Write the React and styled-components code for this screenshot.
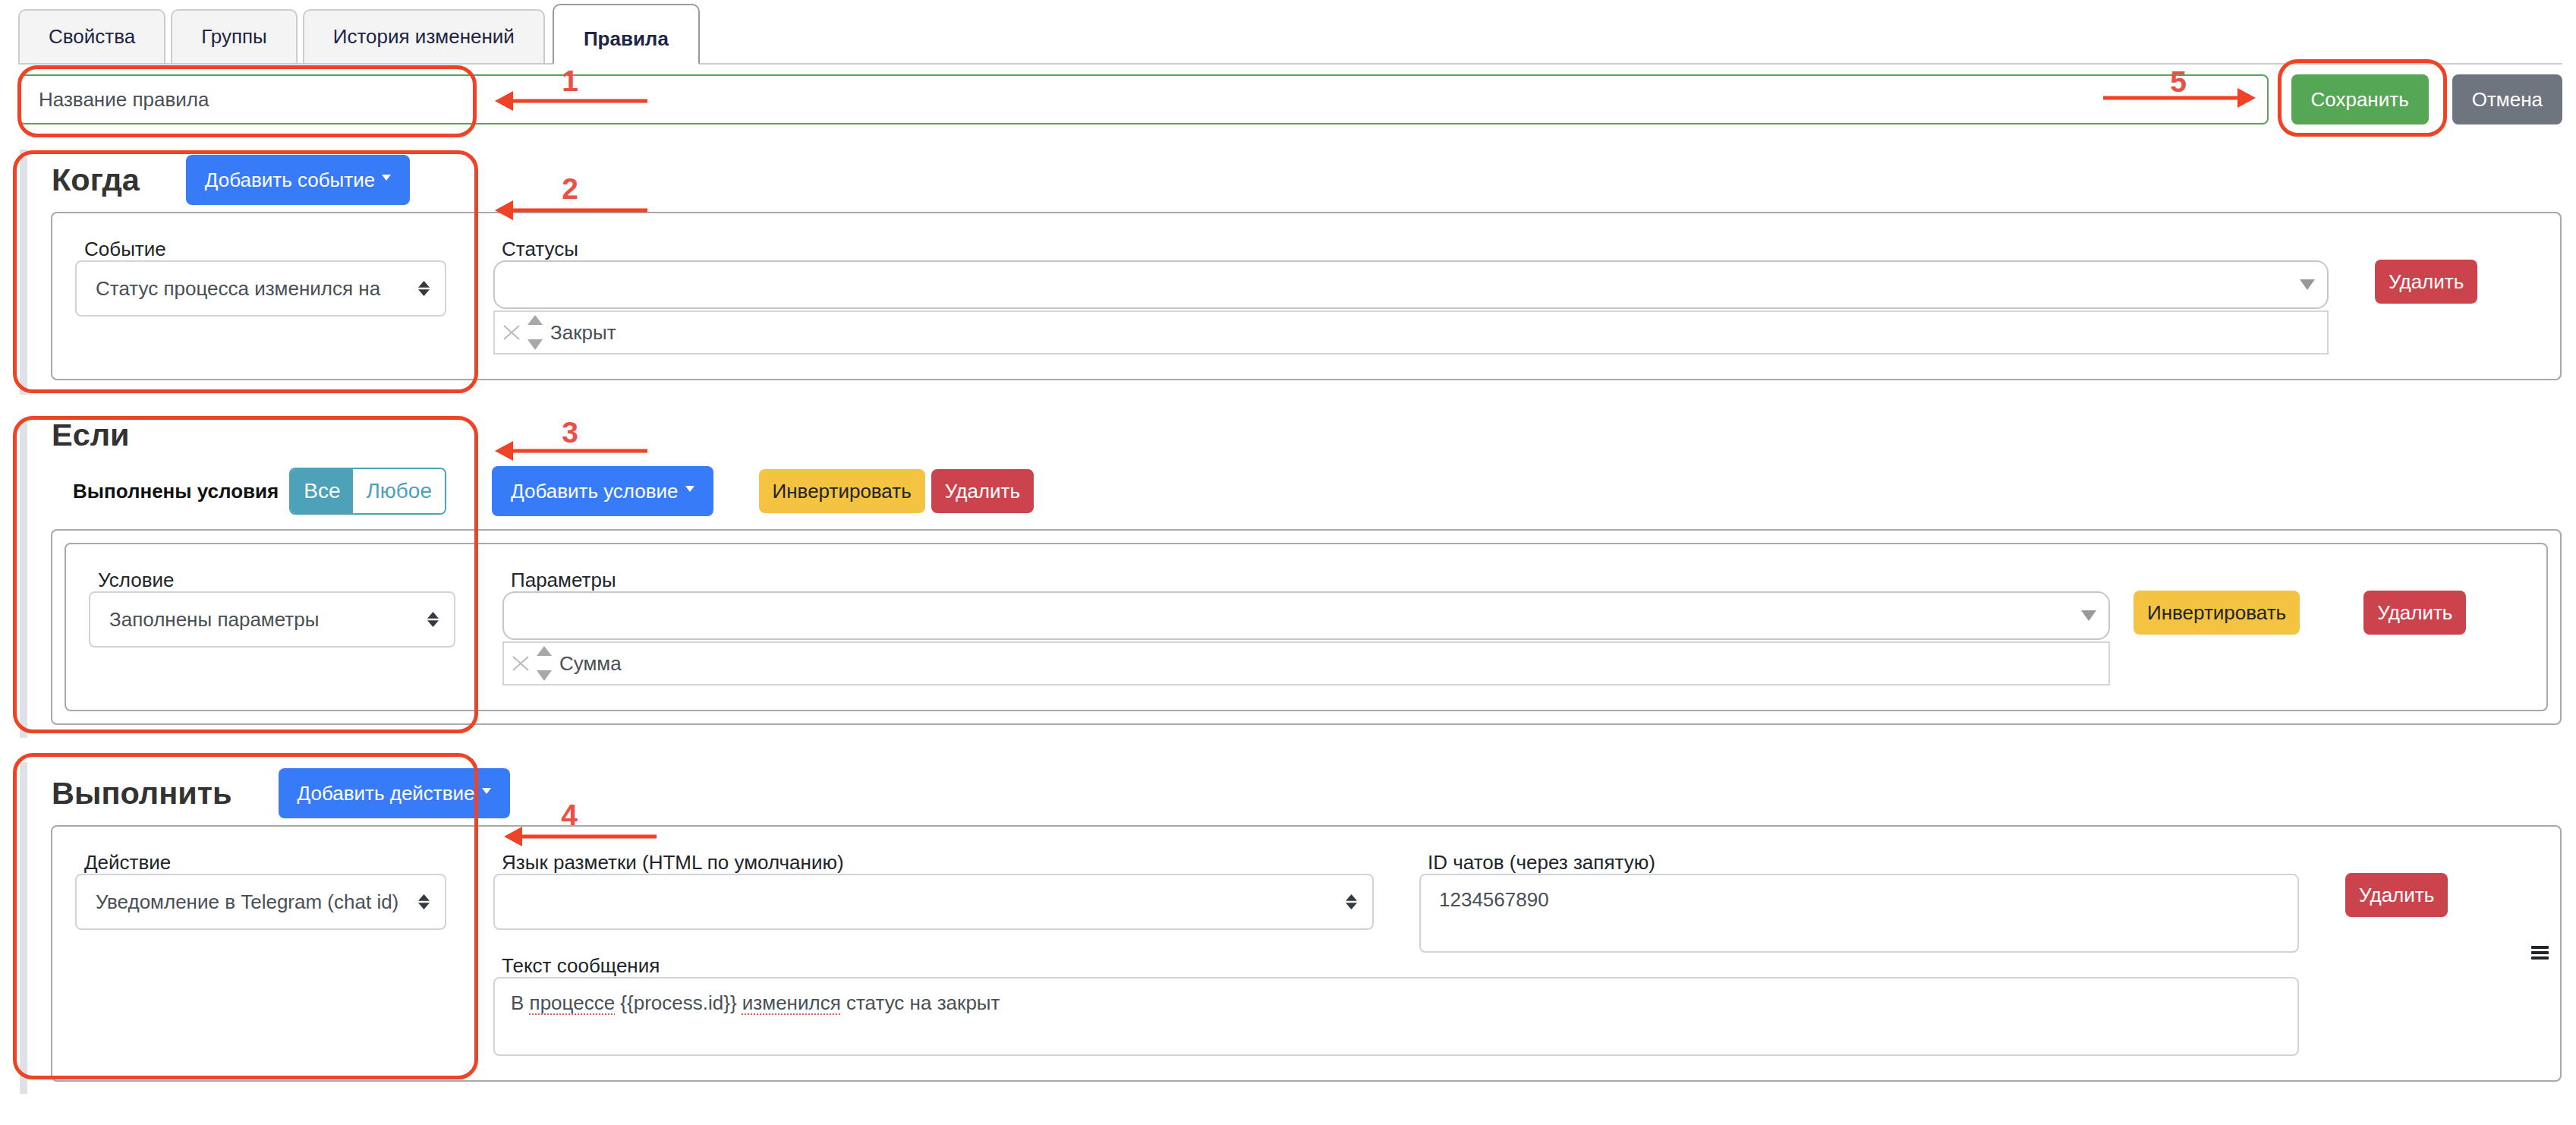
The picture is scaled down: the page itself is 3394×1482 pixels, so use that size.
import React from 'react';
import styled, { createGlobalStyle } from 'styled-components';

const Global = createGlobalStyle`
  html, body { margin: 0; padding: 0; background: #fff; }
  body { font-family: "Liberation Sans", Arial, sans-serif; font-size: 26px; color: #212529; }
  * { box-sizing: border-box; }
`;

const Page = styled.div`
  position: relative;
  width: 3394px;
  height: 1482px;
  overflow: hidden;
  padding: 5px 18px 0 24px;
`;

const TabBar = styled.div`
  display: flex;
  align-items: flex-end;
  height: 80px;
  gap: 7px;
  border-bottom: 2px solid #ccc;
`;

const Tab = styled.div`
  display: flex;
  align-items: center;
  justify-content: center;
  height: ${p => (p.$active ? '80px' : '71px')};
  margin-bottom: ${p => (p.$active ? '-2px' : '0')};
  margin-left: ${p => (p.$active ? '3px' : '0')};
  padding: ${p => (p.$active ? '13px 39px 0' : '0 38px')};
  border: 2px solid ${p => (p.$active ? '#999' : '#ccc')};
  border-bottom: ${p => (p.$active ? '2px solid #fff' : '0')};
  border-radius: 10px 10px 0 0;
  background: ${p => (p.$active ? '#fff' : '#f4f4f4')};
  color: #1f2544;
  font-weight: ${p => (p.$active ? 700 : 400)};
  font-size: 26px;
`;

const TitleRow = styled.div`
  display: flex;
  align-items: stretch;
  margin-top: 13px;
  height: 66px;
`;

const TitleInput = styled.div`
  display: flex;
  align-items: center;
  flex: 1;
  padding-left: 25px;
  margin-right: 30px;
  border: 2px solid #55a755;
  border-radius: 8px;
  color: #495057;
  font-size: 26px;
`;

const Button = styled.div`
  display: inline-flex;
  align-items: center;
  justify-content: center;
  flex: none;
  height: ${p => (p.$sm ? '58px' : '66px')};
  padding: 0 ${p => p.$pad || 18}px;
  margin-left: ${p => p.$ml || 0}px;
  margin-top: ${p => p.$mt || 0}px;
  border-radius: 8px;
  background: ${p => p.$bg};
  color: ${p => p.$fg || '#fff'};
  font-size: 26px;
  white-space: nowrap;
`;

const Caret = styled.span`
  width: 0;
  height: 0;
  margin-left: 9px;
  margin-bottom: 6px;
  border-top: 8px solid currentColor;
  border-left: 6px solid transparent;
  border-right: 6px solid transparent;
`;

const Section = styled.section`
  margin: ${p => p.$mt}px 1px 32px 2px;
  padding: ${p => p.$pt}px 0 ${p => p.$pb}px 31px;
  border-left: 10px solid #dee2e6;
`;

const SectionHead = styled.div`
  display: flex;
  align-items: center;
  gap: 61px;
  padding-left: 1px;
`;

const Heading = styled.h2`
  margin: 0;
  font-size: 41.5px;
  line-height: 40px;
  font-weight: 700;
  color: #333;
`;

const IfHeading = styled(Heading)`
  padding: 1px 0 0 1px;
`;

const ConditionsBar = styled.div`
  display: flex;
  align-items: center;
  margin-top: 21px;
  padding-left: 29px;
`;

const ConditionsLabel = styled.span`
  font-weight: 700;
  color: #111;
  font-size: 26px;
  margin-right: 14px;
  white-space: nowrap;
`;

const Toggle = styled.div`
  display: flex;
  height: 62px;
  margin-right: 60px;
  border: 2px solid #4da1b8;
  border-radius: 8px;
  overflow: hidden;
`;

const ToggleOption = styled.div`
  display: flex;
  align-items: center;
  padding: 0 ${p => p.$pad}px;
  font-size: 28px;
  background: ${p => (p.$on ? '#4da1b8' : '#fff')};
  color: ${p => (p.$on ? '#fff' : '#4da1b8')};
`;

const Panel = styled.div`
  margin-top: ${p => p.$mt || 0}px;
  border: 2px solid #a9a9a9;
  border-radius: 8px;
  padding: ${p => (p.$outer ? '16px' : '32px 0 32px 30px')};
  display: ${p => (p.$outer ? 'block' : 'flex')};
  align-items: flex-start;
`;

const FieldCol = styled.div`
  flex: none;
  width: ${p => p.$w}px;
  margin-left: ${p => p.$ml || 0}px;
`;

const Label = styled.div`
  height: 30px;
  line-height: 30px;
  padding-left: ${p => p.$pl || 11}px;
  color: #212529;
  font-size: 26px;
  white-space: nowrap;
`;

const Select = styled.div`
  display: flex;
  align-items: center;
  justify-content: space-between;
  height: 74px;
  padding: 0 20px 0 25px;
  border: 2px solid #ced4da;
  border-radius: 8px;
  color: #495057;
  font-size: 26px;
  white-space: nowrap;
`;

const MultiInput = styled.div`
  display: flex;
  align-items: center;
  justify-content: flex-end;
  height: 64px;
  padding-right: 16px;
  border: 2px solid #c6c6c6;
  border-radius: 16px;
`;

const MultiItem = styled.div`
  display: flex;
  align-items: center;
  height: 58px;
  margin-top: 2px;
  padding-left: 11px;
  gap: 10px;
  border: 2px solid #d5d5d5;
  color: #495057;
  font-size: 26px;
`;

const FormGrid = styled.div`
  display: grid;
  flex: none;
  width: 2379px;
  margin-left: 62px;
  grid-template-columns: 1160px 1159px;
  column-gap: 60px;
  row-gap: 2px;
  align-items: start;
`;

const Wide = styled.div`
  grid-column: 1 / span 2;
`;

const TextBox = styled.div`
  height: 104px;
  padding: 16px 24px 16px ${p => p.$pl || 24}px;
  border: 2px solid #ced4da;
  border-radius: 8px;
  color: #495057;
  font-size: 26px;
  line-height: 32px;
`;

const Misspelled = styled.span`
  text-decoration: underline dotted #f2574b 2px;
  text-underline-offset: 5px;
`;

const ActionsCol = styled.div`
  display: flex;
  flex-direction: column;
  align-items: flex-start;
  margin-left: 61px;
  width: 268px;
`;

const Grip = styled.svg`
  align-self: flex-end;
  margin-top: 38px;
`;

const Callout = styled.div`
  position: absolute;
  left: ${p => p.$x}px;
  top: ${p => p.$y}px;
  width: ${p => p.$w}px;
  height: ${p => p.$h}px;
  border: 5px solid #ee4326;
  border-radius: 26px;
  pointer-events: none;
`;

const ArrowSvg = styled.svg`
  position: absolute;
  left: ${p => p.$x}px;
  top: ${p => p.$y}px;
`;

const Num = styled.span`
  position: absolute;
  left: ${p => p.$x}px;
  top: ${p => p.$y}px;
  width: 40px;
  margin-left: -20px;
  text-align: center;
  font-size: 39px;
  line-height: 40px;
  font-weight: 700;
  color: #ea5043;
`;

const SortArrows = () => (
  <svg width="15" height="20" viewBox="0 0 15 20" fill="#343a40">
    <path d="M7.5 0 L15 8.7 H0 Z" />
    <path d="M7.5 20 L15 11.3 H0 Z" />
  </svg>
);

const DropArrow = () => (
  <svg width="20" height="14" viewBox="0 0 20 14" fill="#999">
    <path d="M0 0 H20 L10 14 Z" />
  </svg>
);

const ItemControls = () => (
  <>
    <svg width="22" height="20" viewBox="0 0 22 20" fill="none" stroke="#bbb" strokeWidth="2">
      <path d="M1 1 L21 19 M21 1 L1 19" />
    </svg>
    <svg width="20" height="46" viewBox="0 0 20 46" fill="#a8a8a8">
      <path d="M10 0 L20 13 H0 Z" />
      <path d="M10 46 L20 32 H0 Z" />
    </svg>
  </>
);

const LeftArrow = ({ x, y, len }) => (
  <ArrowSvg $x={x} $y={y - 13} width={len} height="26" viewBox={`0 0 ${len} 26`}>
    <path fill="#ee4326" d={`M0 13 L24 0 V10.5 H${len} V15.5 H24 V26 Z`} />
  </ArrowSvg>
);

const RightArrow = ({ x, y, len }) => (
  <ArrowSvg $x={x} $y={y - 13} width={len} height="26" viewBox={`0 0 ${len} 26`}>
    <path fill="#ee4326" d={`M${len} 13 L${len - 24} 0 V10.5 H0 V15.5 H${len - 24} V26 Z`} />
  </ArrowSvg>
);

const BLUE = '#387bf8';
const RED = '#cb444d';
const YELLOW = '#f4c342';
const DARK = '#212529';

export default function App() {
  return (
    <Page>
      <Global />
      <TabBar>
        <Tab>Свойства</Tab>
        <Tab>Группы</Tab>
        <Tab>История изменений</Tab>
        <Tab $active>Правила</Tab>
      </TabBar>

      <TitleRow>
        <TitleInput>Название правила</TitleInput>
        <Button $bg="#55a755" $pad={26}>Сохранить</Button>
        <Button $bg="#6f757e" $pad={26} $ml={31}>Отмена</Button>
      </TitleRow>

      <Section $mt={33} $pb={19} $pt={7}>
        <SectionHead>
          <Heading>Когда</Heading>
          <Button $bg={BLUE} $pad={25}>Добавить событие<Caret /></Button>
        </SectionHead>
        <Panel $mt={9}>
          <FieldCol $w={489}>
            <Label $pl={12}>Событие</Label>
            <Select>Статус процесса изменился на<SortArrows /></Select>
          </FieldCol>
          <FieldCol $w={2418} $ml={62}>
            <Label>Статусы</Label>
            <MultiInput><DropArrow /></MultiInput>
            <MultiItem><ItemControls />Закрыт</MultiItem>
          </FieldCol>
          <Button $sm $bg={RED} $ml={61} $mt={29}>Удалить</Button>
        </Panel>
      </Section>

      <Section $mt={0} $pb={17} $pt={0}>
        <IfHeading>Если</IfHeading>
        <ConditionsBar>
          <ConditionsLabel>Выполнены условия</ConditionsLabel>
          <Toggle>
            <ToggleOption $on $pad={17}>Все</ToggleOption>
            <ToggleOption $pad={17}>Любое</ToggleOption>
          </Toggle>
          <Button $bg={BLUE} $pad={25}>Добавить условие<Caret /></Button>
          <Button $sm $bg={YELLOW} $fg={DARK} $ml={60}>Инвертировать</Button>
          <Button $sm $bg={RED} $ml={8}>Удалить</Button>
        </ConditionsBar>
        <Panel $outer $mt={17}>
          <Panel>
            <FieldCol $w={483}>
              <Label $pl={12}>Условие</Label>
              <Select>Заполнены параметры<SortArrows /></Select>
            </FieldCol>
            <FieldCol $w={2118} $ml={62}>
              <Label>Параметры</Label>
              <MultiInput><DropArrow /></MultiInput>
              <MultiItem><ItemControls />Сумма</MultiItem>
            </FieldCol>
            <Button $sm $bg={YELLOW} $fg={DARK} $ml={31} $mt={29}>Инвертировать</Button>
            <Button $sm $bg={RED} $ml={84} $mt={29}>Удалить</Button>
          </Panel>
        </Panel>
      </Section>

      <Section $mt={0} $pb={16} $pt={8}>
        <SectionHead>
          <Heading>Выполнить</Heading>
          <Button $bg={BLUE} $pad={25}>Добавить действие<Caret /></Button>
        </SectionHead>
        <Panel $mt={9}>
          <FieldCol $w={489}>
            <Label $pl={12}>Действие</Label>
            <Select>Уведомление в Telegram (chat id)<SortArrows /></Select>
          </FieldCol>
          <FormGrid>
            <div>
              <Label>Язык разметки (HTML по умолчанию)</Label>
              <Select><span /><SortArrows /></Select>
            </div>
            <div>
              <Label>ID чатов (через запятую)</Label>
              <TextBox>1234567890</TextBox>
            </div>
            <Wide>
              <Label>Текст сообщения</Label>
              <TextBox $pl={21}>
                В <Misspelled>процессе</Misspelled> {'{{process.id}}'} <Misspelled>изменился</Misspelled> статус на закрыт
              </TextBox>
            </Wide>
          </FormGrid>
          <ActionsCol>
            <Button $sm $bg={RED} $mt={29}>Удалить</Button>
            <Grip width="23" height="18" viewBox="0 0 23 18" fill="#212529">
              <rect width="23" height="4" y="0" rx="1" />
              <rect width="23" height="4" y="7" rx="1" />
              <rect width="23" height="4" y="14" rx="1" />
            </Grip>
          </ActionsCol>
        </Panel>
      </Section>

      <Callout $x={23} $y={86} $w={605} $h={95} />
      <Callout $x={17} $y={198} $w={613} $h={320} />
      <Callout $x={17} $y={548} $w={613} $h={418} />
      <Callout $x={17} $y={992} $w={613} $h={430} />
      <Callout $x={3001} $y={78} $w={223} $h={102} />

      <LeftArrow x={652} y={133} len={201} />
      <LeftArrow x={652} y={277} len={201} />
      <LeftArrow x={652} y={594} len={201} />
      <LeftArrow x={664} y={1102} len={201} />
      <RightArrow x={2771} y={129} len={201} />

      <Num $x={751} $y={87}>1</Num>
      <Num $x={751} $y={229}>2</Num>
      <Num $x={751} $y={550}>3</Num>
      <Num $x={750} $y={1054}>4</Num>
      <Num $x={2870} $y={88}>5</Num>
    </Page>
  );
}
